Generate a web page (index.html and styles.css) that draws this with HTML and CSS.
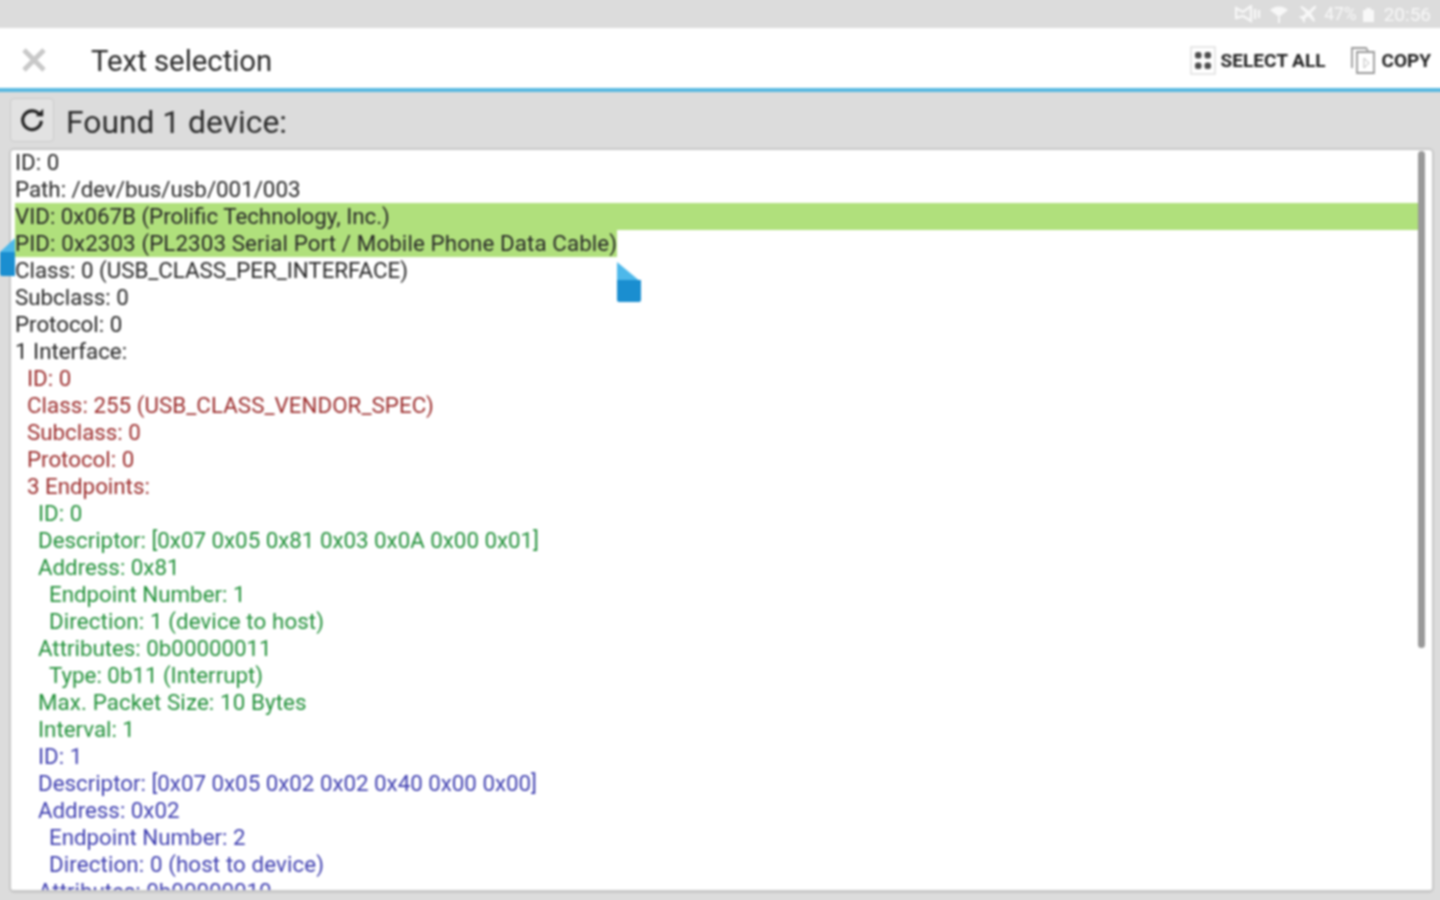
FILE: index.html
```html
<!DOCTYPE html>
<html lang="en">
<head>
<meta charset="utf-8">
<title>Text selection</title>
<link rel="stylesheet" href="styles.css">
</head>
<body>
<div class="app">
  <div class="status">
    <svg class="st-icon" width="26" height="18" viewBox="0 0 26 18"><path d="M1 3l7 4 8-6v15l-8-5-7 2zM20 4v10M24 5v8" fill="none" stroke="#f8f8f8" stroke-width="2.2"/></svg>
    <svg class="st-icon st-wifi" width="20" height="20" viewBox="0 0 20 20"><path d="M1 6a13 13 0 0 1 18 0l-9 7zM9 13h2v6H9z" fill="#f8f8f8"/></svg>
    <svg class="st-icon" width="18" height="18" viewBox="0 0 18 18"><path d="M1 2l2-1 7 5 4-4q2-2 3-1t-1 3l-4 4 4 7-1 2-6-6-3 3v3l-1 1-2-4-3-2 1-1h3l3-3z" fill="#f8f8f8"/></svg>
    <span class="st-pct">47%</span>
    <svg class="st-icon st-batt" width="11" height="15" viewBox="0 0 11 15"><path d="M3 3V1h5v2h3v12H0V3z" fill="#f8f8f8"/></svg>
    <span class="st-time">20:56</span>
  </div>
  <header class="bar">
    <svg class="close" width="26" height="26" viewBox="0 0 26 26"><path d="M3 3l20 20M23 3L3 23" stroke="#c8c8c8" stroke-width="4.8" fill="none"/></svg>
    <h1 class="title">Text selection</h1>
    <div class="actions">
      <button class="action sel">
        <svg width="26" height="29" viewBox="0 0 26 29"><rect x="1" y="1" width="24" height="27" fill="none" stroke="#cfcfcf"/><rect x="5" y="6" width="6.5" height="6.5" rx="2.5" fill="#4c4c4c"/><rect x="14.5" y="6" width="6.5" height="6.5" rx="2.5" fill="#4c4c4c"/><rect x="5" y="16.5" width="6.5" height="6.5" rx="2.5" fill="#4c4c4c"/><rect x="14.5" y="16.5" width="6.5" height="6.5" rx="2.5" fill="#4c4c4c"/></svg>
        <span>SELECT ALL</span>
      </button>
      <button class="action">
        <svg width="25" height="29" viewBox="0 0 25 29"><path d="M1 22V2h14l2 3M6 27V6h17v21z" fill="#fff" stroke="#999" stroke-width="1.8"/><path d="M13 12l5 5-5 5z" fill="none" stroke="#bbb"/></svg>
        <span>COPY</span>
      </button>
    </div>
  </header>
  <div class="content">
    <div class="tool">
      <button class="refresh" aria-label="Refresh">
        <svg width="28" height="28" viewBox="0 0 30 30"><path d="M23.5 11A10 10 0 1 0 25 17" fill="none" stroke="#222" stroke-width="3.4"/><path d="M19 12h8V4z" fill="#222"/></svg>
      </button>
      <span class="found">Found 1 device:</span>
    </div>
    <div class="panel">
      <div class="ln">ID: 0</div>
      <div class="ln">Path: /dev/bus/usb/001/003</div>
      <div class="ln hl">VID: 0x067B (Prolific Technology, Inc.)</div>
      <div class="ln"><span class="hl hl-part">PID: 0x2303 (PL2303 Serial Port / Mobile Phone Data Cable)</span></div>
      <div class="ln">Class: 0 (USB_CLASS_PER_INTERFACE)</div>
      <div class="ln">Subclass: 0</div>
      <div class="ln">Protocol: 0</div>
      <div class="ln">1 Interface:</div>
      <div class="ln red i1">ID: 0</div>
      <div class="ln red i1 mid">Class: 255 (USB_CLASS_VENDOR_SPEC)</div>
      <div class="ln red i1">Subclass: 0</div>
      <div class="ln red i1">Protocol: 0</div>
      <div class="ln red i1">3 Endpoints:</div>
      <div class="ln green i2">ID: 0</div>
      <div class="ln green i2">Descriptor: [0x07 0x05 0x81 0x03 0x0A 0x00 0x01]</div>
      <div class="ln green i2">Address: 0x81</div>
      <div class="ln green i3">Endpoint Number: 1</div>
      <div class="ln green i3 wide">Direction: 1 (device to host)</div>
      <div class="ln green i2">Attributes: 0b00000011</div>
      <div class="ln green i3">Type: 0b11 (Interrupt)</div>
      <div class="ln green i2 wide">Max. Packet Size: 10 Bytes</div>
      <div class="ln green i2">Interval: 1</div>
      <div class="ln blue i2">ID: 1</div>
      <div class="ln blue i2">Descriptor: [0x07 0x05 0x02 0x02 0x40 0x00 0x00]</div>
      <div class="ln blue i2">Address: 0x02</div>
      <div class="ln blue i3">Endpoint Number: 2</div>
      <div class="ln blue i3 wide">Direction: 0 (host to device)</div>
      <div class="ln blue i2">Attributes: 0b00000010</div>
      <div class="scroll"></div>
    </div>
    <svg class="handle handle-l" width="15" height="38" viewBox="0 0 15 38"><path d="M15 0v14H0z" fill="#4db8ea"/><path d="M0 14h15v24H2q-2 0-2-2z" fill="#1a8ed0"/></svg>
    <svg class="handle handle-r" width="24" height="40" viewBox="0 0 24 40"><path d="M0 0l24 20H0z" fill="#4db8ea"/><path d="M0 18h24v20q0 2-2 2H2q-2 0-2-2z" fill="#1a8ed0"/></svg>
  </div>
</div>
</body>
</html>
```
FILE: styles.css
```css
html, body {
  margin: 0;
  height: 100%;
  overflow: hidden;
  background: #dcdcdc;
}
.app {
  width: 1448px;
  height: 900px;
  margin-left: -4px;
  display: flex;
  flex-direction: column;
  font-family: Roboto, "Liberation Sans", sans-serif;
  filter: blur(0.8px);
}
.status {
  height: 28px;
  flex: none;
  background: #dcdcdc;
  display: flex;
  align-items: center;
  justify-content: flex-end;
  padding-right: 13px;
  color: #f8f8f8;
  font-size: 17px;
}
.st-icon { margin-left: 10px; flex: none; }
.st-wifi { margin-left: 8px; }
.st-pct { margin-left: 7px; font-size: 17.5px; }
.st-batt { margin-left: 6px; }
.st-time { margin-left: 10px; font-size: 19px; }
.bar {
  height: 56px;
  flex: none;
  background: #fff;
  border-bottom: 4px solid #58b8e0;
  display: flex;
  align-items: center;
  padding: 4px 13px 0 25px;
}
.close { flex: none; }
.title {
  margin: 2px 0 0 44px;
  font-size: 29.3px;
  font-weight: 400;
  color: #2a2a2a;
}
.actions {
  margin-left: auto;
  display: flex;
  align-items: center;
  gap: 26px;
}
.action {
  display: flex;
  align-items: center;
  gap: 5px;
  padding: 0;
  border: 0;
  background: none;
  font: 700 19px Roboto, "Liberation Sans", sans-serif;
  color: #222;
}
.content {
  position: relative;
  flex: 1;
  min-height: 0;
  background: #dcdcdc;
  padding: 0 10px 7px 13px;
  display: flex;
  flex-direction: column;
}
.tool {
  height: 56px;
  flex: none;
  display: flex;
  align-items: center;
  padding-left: 1px;
}
.refresh {
  width: 44px;
  height: 44px;
  margin-top: -1px;
  padding: 0 0 2px;
  display: flex;
  align-items: center;
  justify-content: center;
  background: #e2e2e2;
  border: 1.5px solid #cbcbcb;
  border-radius: 4px;
}
.found {
  margin: 4px 0 0 12px;
  font-size: 31.8px;
  color: #2a2a2a;
}
.panel {
  position: relative;
  flex: 1;
  min-height: 0;
  overflow: hidden;
  background: #fff;
  border: 2px solid #c8c8c8;
  border-bottom-width: 3px;
  border-radius: 5px;
  padding-left: 4px;
  font-size: 22.3px;
  line-height: 27px;
  color: #262626;
}
.ln { height: 27px; white-space: nowrap; margin-right: 13px; }
.ln:first-child { margin-top: -1px; }
.hl { background: #b0e07c; }
.hl-part { display: inline-block; letter-spacing: 0.12px; }
.wide { letter-spacing: 0.12px; }
.mid { letter-spacing: 0.06px; }
.red { color: #9c2c2c; }
.green { color: #22913a; }
.blue { color: #3f3fb0; }
.i1 { padding-left: 12px; }
.i2 { padding-left: 23px; }
.i3 { padding-left: 34px; }
.scroll {
  position: absolute;
  top: 1px;
  left: 1407px;
  width: 7px;
  height: 497px;
  background: #999;
  border-radius: 4px;
}
.handle { position: absolute; }
.handle-l { left: 4px; top: 146px; }
.handle-r { left: 621px; top: 170px; }
```
